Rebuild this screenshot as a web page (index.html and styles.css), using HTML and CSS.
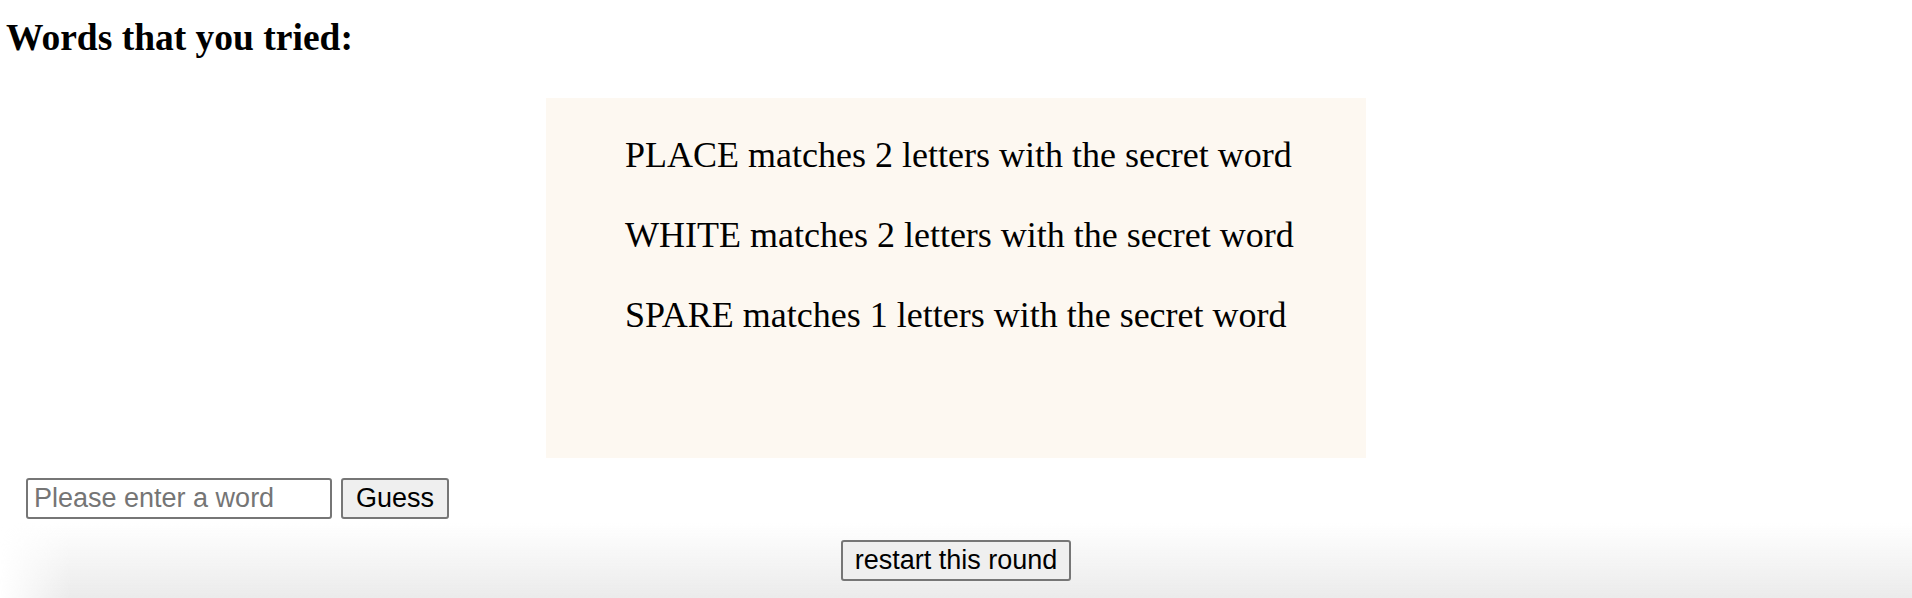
FILE: index.html
```html
<!DOCTYPE html>
<html>
<head>
<meta charset="utf-8">
<link rel="stylesheet" href="styles.css">
</head>
<body>
<h1 class="title">Words that you tried:</h1>
<div class="tries">
  <p class="try">PLACE matches 2 letters with the secret word</p>
  <p class="try">WHITE matches 2 letters with the secret word</p>
  <p class="try">SPARE matches 1 letters with the secret word</p>
</div>
<div class="guess-row">
  <input class="word-input" type="text" placeholder="Please enter a word">
  <button class="btn">Guess</button>
</div>
<div class="restart-row">
  <button class="btn btn-wide">restart this round</button>
</div>
</body>
</html>
```

FILE: styles.css
```css
html, body {
  margin: 0;
  padding: 0;
}
body {
  font-family: "Liberation Serif", "Times New Roman", serif;
  color: #000;
  background: #fff;
  height: 598px;
  overflow: hidden;
  position: relative;
}
body::after {
  content: "";
  position: absolute;
  left: 0;
  right: 0;
  bottom: 0;
  height: 75px;
  background: linear-gradient(to bottom, rgba(235,235,235,0), rgba(235,235,235,1));
  -webkit-mask-image: linear-gradient(to right, transparent, #000 70px);
  mask-image: linear-gradient(to right, transparent, #000 70px);
  pointer-events: none;
}
.title {
  font-size: 37.5px;
  font-weight: bold;
  margin: 0;
  padding: 14px 0 0 6px;
  line-height: 48px;
}
.tries {
  width: 820px;
  height: 360px;
  margin: 36px auto 0;
  background: #fdf8f1;
  box-sizing: border-box;
  padding: 35px 0 0 79px;
}
.try {
  margin: 0 0 36px;
  font-size: 36px;
  line-height: 44px;
  white-space: nowrap;
}
.guess-row {
  display: flex;
  gap: 9px;
  padding: 20px 0 0 26px;
  position: relative;
  z-index: 1;
}
.word-input {
  width: 306px;
  height: 41px;
  box-sizing: border-box;
  border: 2px solid #767676;
  border-radius: 3px;
  font-family: "Liberation Sans", Arial, sans-serif;
  font-size: 27px;
  padding: 0 6px;
}
.word-input::placeholder {
  color: #757575;
}
.btn {
  font-family: "Liberation Sans", Arial, sans-serif;
  font-size: 27px;
  height: 41px;
  padding: 0 13px;
  border: 2px solid #767676;
  border-radius: 3px;
  background: #efefef;
  color: #000;
}
.btn-wide {
  padding: 0 12px;
}
.restart-row {
  display: flex;
  justify-content: center;
  padding-top: 21px;
  position: relative;
  z-index: 1;
}
```
